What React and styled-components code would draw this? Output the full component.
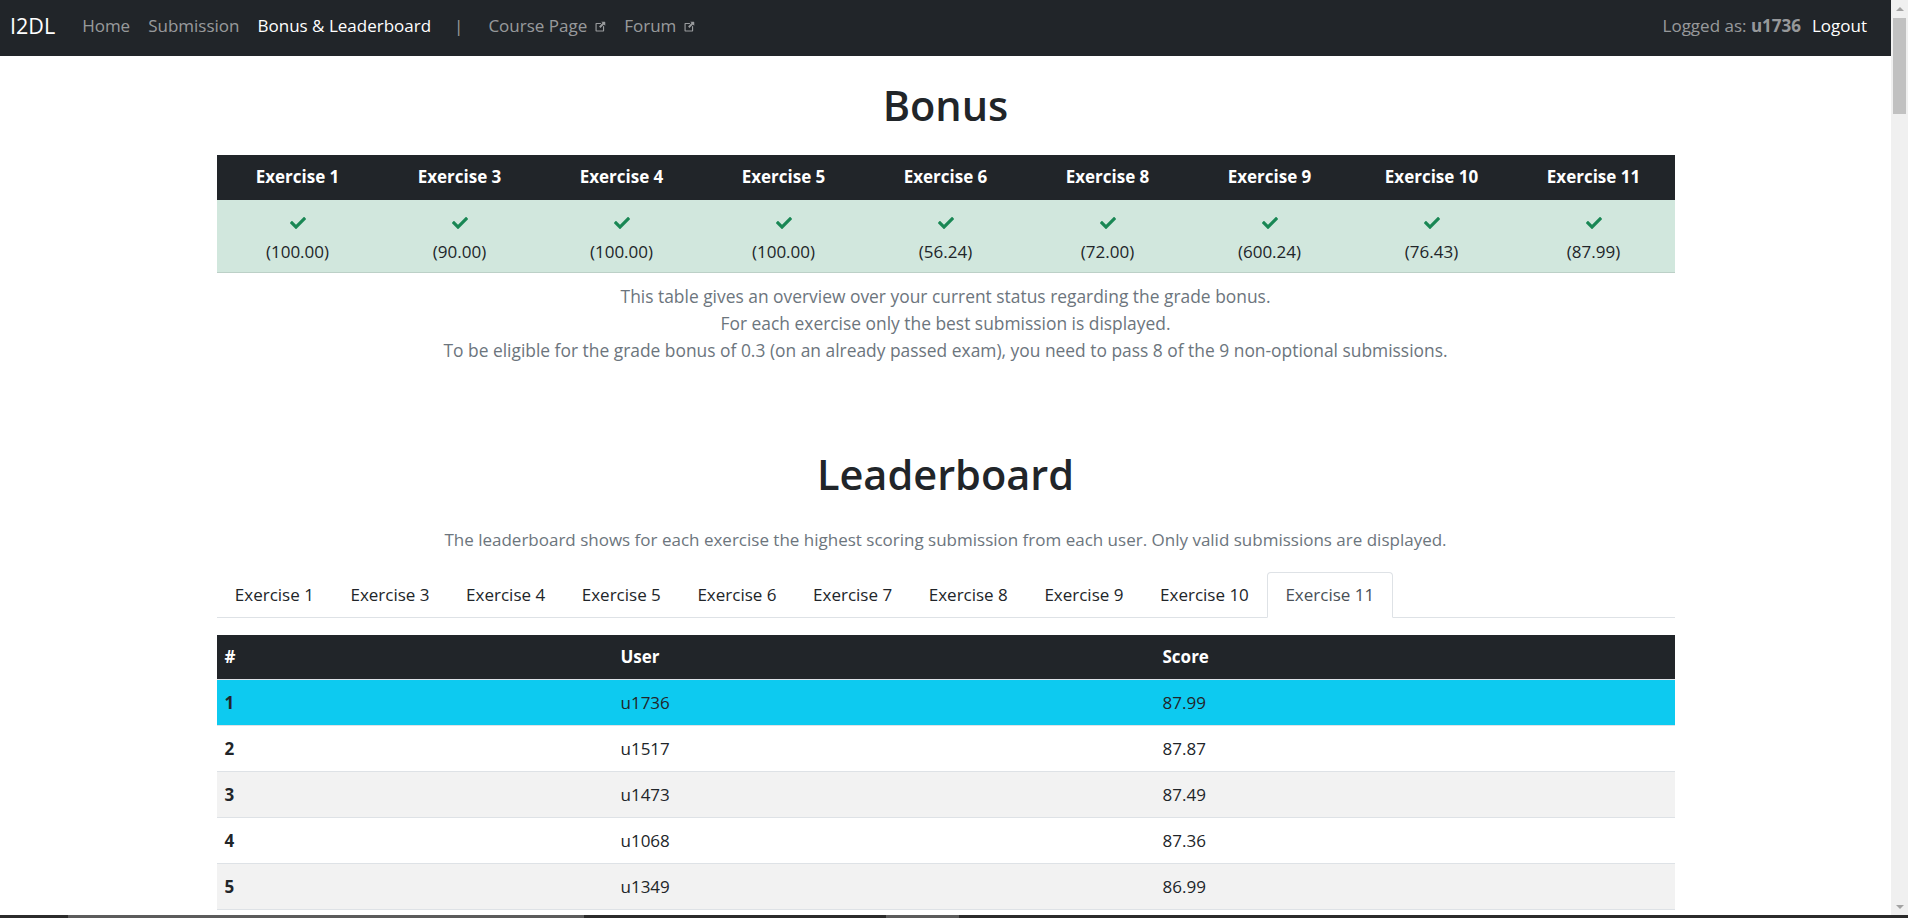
import React from 'react'
import styled, { createGlobalStyle } from 'styled-components'
import { FaCheck } from 'react-icons/fa'

const GlobalStyle = createGlobalStyle`
  html, body {
    margin: 0;
    padding: 0;
    height: 100%;
    overflow: hidden;
  }
  body {
    font-family: "Open Sans", "Segoe UI", sans-serif;
    font-size: 17px;
    line-height: 1.5;
    color: #212529;
    background: #fff;
  }
  * { box-sizing: border-box; }
`

const Screen = styled.div`
  height: 100vh;
  display: flex;
  flex-direction: column;
`

const Viewport = styled.div`
  flex: 1;
  min-height: 0;
  display: flex;
`

const Page = styled.div`
  flex: 1;
  overflow: hidden;
`

const Scrollbar = styled.div`
  width: 17px;
  background: #f0f0f0;
  display: flex;
  flex-direction: column;
  align-items: center;
`

const ScrollArrow = styled.div`
  height: 17px;
  width: 17px;
  display: flex;
  align-items: center;
  justify-content: center;
  margin-top: ${p => (p.$down ? 'auto' : '0')};
  &::after {
    content: '';
    border-left: 4px solid transparent;
    border-right: 4px solid transparent;
    ${p => (p.$down ? 'border-top: 4px solid #a3a3a3;' : 'border-bottom: 4px solid #a3a3a3;')}
  }
`

const Thumb = styled.div`
  width: 13px;
  height: 96px;
  margin-top: 1px;
  background: #c1c1c1;
`

const Taskbar = styled.div`
  height: 3px;
  background: linear-gradient(to right, #2b2b2b 0 68px, #5c5c5c 68px 584px, #2b2b2b 584px 886px, #5c5c5c 886px 959px, #2b2b2b 959px);
`

const Navbar = styled.nav`
  height: 56px;
  background: #212529;
  display: flex;
  align-items: center;
  padding: 0 15px 4px 10px;
`

const Brand = styled.span`
  font-size: 21.5px;
  color: #fff;
  margin-right: 18px;
`

const NavLink = styled.a`
  color: ${p => (p.$active ? '#fff' : 'rgba(255, 255, 255, 0.55)')};
  text-decoration: none;
  padding: 0 9px;
  display: flex;
  align-items: center;
  gap: 7px;
  svg { margin-top: 2px; }
`

const Divider = styled.span`
  color: rgba(255, 255, 255, 0.55);
  padding: 0 16px 0 14px;
`

const NavRight = styled.div`
  margin-left: auto;
  display: flex;
  align-items: center;
`

const LoggedAs = styled.span`
  color: rgba(255, 255, 255, 0.55);
  margin-right: 2px;
  b { font-weight: 700; }
`

const Container = styled.main`
  max-width: 1458px;
  margin: 0 auto;
`

const Title = styled.h1`
  font-size: 41.5px;
  font-weight: 600;
  line-height: 48px;
  text-align: center;
  margin: ${p => p.$margin};
`

const Muted = styled.p`
  color: #6c757d;
  text-align: center;
  font-size: ${p => p.$size || '17px'};
  line-height: ${p => p.$lh || '24px'};
  margin: ${p => p.$margin};
`

const Table = styled.table`
  width: 100%;
  border-collapse: collapse;
  table-layout: fixed;
`

const HeadCell = styled.th`
  background: #212529;
  color: #fff;
  font-weight: 700;
  text-align: ${p => p.$align || 'left'};
  padding: 10px 8px;
  line-height: 24px;
  border-bottom: 1px solid ${p => p.$line || '#212529'};
`

const BonusCell = styled.td`
  background: #d1e7dd;
  border-bottom: 1px solid #bcd0c7;
  text-align: center;
  padding: 10px 8px 8px;
  line-height: 24px;
`

const Check = styled.div`
  height: 26px;
  margin-bottom: 4px;
  display: flex;
  align-items: center;
  justify-content: center;
  color: #198754;
`

const Tabs = styled.div`
  display: flex;
  border-bottom: 1px solid #dee2e6;
  margin-top: 20px;
`

const Tab = styled.a`
  padding: 10px 17.3px;
  line-height: 24px;
  border: 1px solid transparent;
  border-radius: 4px 4px 0 0;
  margin-bottom: -1px;
  color: #212529;
  text-decoration: none;
  ${p =>
    p.$active &&
    `
    color: #495057;
    background: #fff;
    border-color: #dee2e6 #dee2e6 #fff;
  `}
`

const BoardTable = styled(Table)`
  margin-top: 17px;
`

const Row = styled.tr`
  background: ${p => (p.$highlight ? '#0dcaf0' : p.$striped ? '#f2f2f2' : '#fff')};
`

const Cell = styled.td`
  padding: 11px 8px;
  line-height: 23px;
  border-bottom: 1px solid #dee2e6;
  font-weight: ${p => (p.$bold ? 700 : 400)};
`

const ExternalIcon = () => (
  <svg width="12" height="12" viewBox="0 0 16 16" fill="currentColor">
    <path d="M8.6 2.5a.75.75 0 0 1 0 1.5H3.5v8.5H12V7.4a.75.75 0 0 1 1.5 0V13a1 1 0 0 1-1 1H3a1 1 0 0 1-1-1V3.5a1 1 0 0 1 1-1z" />
    <path d="M9.6 1h4.7a.7.7 0 0 1 .7.7v4.7l-1.8-1.8-4.6 4.6-1.8-1.8 4.6-4.6z" />
  </svg>
)

const bonus = [
  ['Exercise 1', '100.00'],
  ['Exercise 3', '90.00'],
  ['Exercise 4', '100.00'],
  ['Exercise 5', '100.00'],
  ['Exercise 6', '56.24'],
  ['Exercise 8', '72.00'],
  ['Exercise 9', '600.24'],
  ['Exercise 10', '76.43'],
  ['Exercise 11', '87.99'],
]

const tabs = ['Exercise 1', 'Exercise 3', 'Exercise 4', 'Exercise 5', 'Exercise 6', 'Exercise 7', 'Exercise 8', 'Exercise 9', 'Exercise 10', 'Exercise 11']

const leaders = [
  [1, 'u1736', '87.99'],
  [2, 'u1517', '87.87'],
  [3, 'u1473', '87.49'],
  [4, 'u1068', '87.36'],
  [5, 'u1349', '86.99'],
]

export default function App() {
  return (
    <Screen>
      <GlobalStyle />
      <Viewport>
        <Page>
          <Navbar>
            <Brand>I2DL</Brand>
            <NavLink href="#">Home</NavLink>
            <NavLink href="#">Submission</NavLink>
            <NavLink href="#" $active>Bonus &amp; Leaderboard</NavLink>
            <Divider>|</Divider>
            <NavLink href="#">Course Page <ExternalIcon /></NavLink>
            <NavLink href="#">Forum <ExternalIcon /></NavLink>
            <NavRight>
              <LoggedAs>Logged as: <b>u1736</b></LoggedAs>
              <NavLink href="#" $active>Logout</NavLink>
            </NavRight>
          </Navbar>

          <Container>
            <Title $margin="25px 0 26px">Bonus</Title>
            <Table>
              <thead>
                <tr>
                  {bonus.map(([name]) => (
                    <HeadCell key={name} $align="center">{name}</HeadCell>
                  ))}
                </tr>
              </thead>
              <tbody>
                <tr>
                  {bonus.map(([name, score]) => (
                    <BonusCell key={name}>
                      <Check><FaCheck size={16} /></Check>
                      ({score})
                    </BonusCell>
                  ))}
                </tr>
              </tbody>
            </Table>
            <Muted $size="17.4px" $lh="27px" $margin="10px 0 0">
              This table gives an overview over your current status regarding the grade bonus.<br />
              For each exercise only the best submission is displayed.<br />
              To be eligible for the grade bonus of 0.3 (on an already passed exam), you need to pass 8 of the 9 non-optional submissions.
            </Muted>

            <Title $margin="86px 0 30px">Leaderboard</Title>
            <Muted $margin="0">
              The leaderboard shows for each exercise the highest scoring submission from each user. Only valid submissions are displayed.
            </Muted>
            <Tabs>
              {tabs.map((t, i) => (
                <Tab key={t} href="#" $active={i === tabs.length - 1}>{t}</Tab>
              ))}
            </Tabs>
            <BoardTable>
              <colgroup>
                <col style={{ width: 396 }} />
                <col style={{ width: 542 }} />
                <col />
              </colgroup>
              <thead>
                <tr>
                  <HeadCell $line="#dee2e6">#</HeadCell>
                  <HeadCell $line="#dee2e6">User</HeadCell>
                  <HeadCell $line="#dee2e6">Score</HeadCell>
                </tr>
              </thead>
              <tbody>
                {leaders.map(([rank, user, score], i) => (
                  <Row key={rank} $highlight={user === 'u1736'} $striped={i % 2 === 0}>
                    <Cell $bold>{rank}</Cell>
                    <Cell>{user}</Cell>
                    <Cell>{score}</Cell>
                  </Row>
                ))}
              </tbody>
            </BoardTable>
          </Container>
        </Page>
        <Scrollbar>
          <ScrollArrow />
          <Thumb />
          <ScrollArrow $down />
        </Scrollbar>
      </Viewport>
      <Taskbar />
    </Screen>
  )
}
